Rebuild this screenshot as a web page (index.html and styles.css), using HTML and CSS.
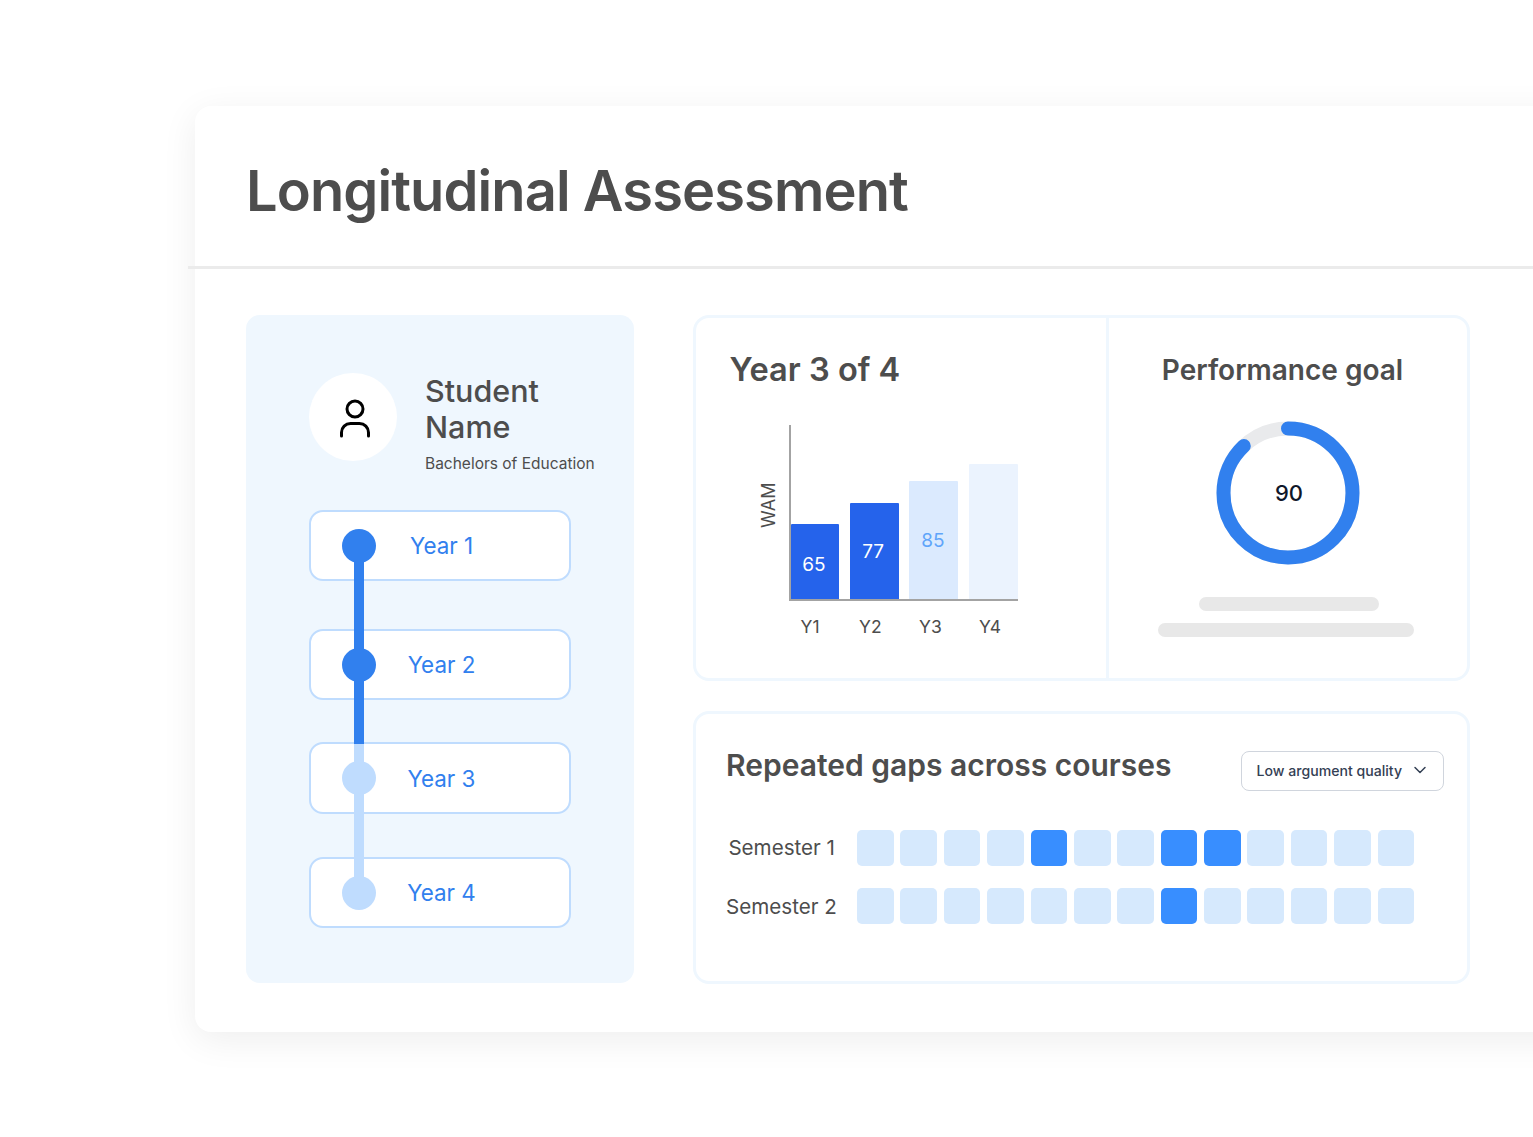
FILE: index.html
```html
<!DOCTYPE html>
<html lang="en">
<head>
    <meta charset="UTF-8">
    <title>Longitudinal Assessment</title>
    <link rel="stylesheet" href="styles.css">
</head>
<body>
    <div class="card">
        <h1 class="page-title">Longitudinal Assessment</h1>
        <div class="rule"></div>

        <div class="content">
            <!-- Student column -->
            <div class="student">
                <div class="student-head">
                    <div class="avatar">
                        <svg width="88" height="88" viewBox="0 0 88 88" fill="none" stroke="#000" stroke-width="3" stroke-linecap="round">
                            <circle cx="46" cy="36" r="8"/>
                            <path d="M32.5 63v-3.5a9 9 0 0 1 9-9h9a9 9 0 0 1 9 9V63"/>
                        </svg>
                    </div>
                    <div class="student-text">
                        <div class="student-name">Student Name</div>
                        <div class="student-degree">Bachelors of Education</div>
                    </div>
                </div>

                <div class="years">
                    <div class="year-row done"><span class="dot"></span><span class="year-label">Year 1</span></div>
                    <div class="year-row done"><span class="dot"></span><span class="year-label">Year 2</span></div>
                    <div class="year-row"><span class="dot"></span><span class="year-label">Year 3</span></div>
                    <div class="year-row"><span class="dot"></span><span class="year-label">Year 4</span></div>
                    <div class="year-line"></div>
                </div>
            </div>

            <div class="panels">
                <div class="panel panel-top">
                    <div class="progress">
                        <h2 class="progress-title">Year 3 of 4</h2>
                        <div class="chart">
                            <div class="chart-axis-name">WAM</div>
                            <div class="chart-main">
                                <div class="chart-plot">
                                    <div class="bar bar-strong bar-low" style="height: 75px">65</div>
                                    <div class="bar bar-strong" style="height: 96px">77</div>
                                    <div class="bar bar-soft" style="height: 118px">85</div>
                                    <div class="bar bar-empty" style="height: 135px"></div>
                                </div>
                                <div class="chart-labels">
                                    <span>Y1</span><span>Y2</span><span>Y3</span><span>Y4</span>
                                </div>
                            </div>
                        </div>
                    </div>
                    <div class="goal">
                        <h2 class="goal-title">Performance goal</h2>
                        <div class="donut">
                            <svg width="144" height="144" viewBox="0 0 144 144" fill="none" stroke-width="14">
                                <circle cx="72" cy="72" r="64.5" stroke="#e9eaec"/>
                                <circle cx="72" cy="72" r="64.5" stroke="#3180ee" stroke-linecap="round" stroke-dasharray="356 405.3" transform="rotate(-90 72 72)"/>
                            </svg>
                            <span class="donut-value">90</span>
                        </div>
                        <div class="skeleton skeleton-short"></div>
                        <div class="skeleton skeleton-long"></div>
                    </div>
                </div>

                <div class="panel panel-gaps">
                    <div class="gaps-head">
                        <h2 class="gaps-title">Repeated gaps across courses</h2>
                        <div class="select">
                            Low argument quality
                            <svg width="14" height="14" viewBox="0 0 14 14" fill="none" stroke="#344054" stroke-width="1.5" stroke-linecap="round" stroke-linejoin="round">
                                <path d="M2 3.5l5 5 5-5"/>
                            </svg>
                        </div>
                    </div>
                    <div class="gap-row">
                        <span class="gap-label">Semester 1</span>
                        <div class="cells">
                            <i></i><i></i><i></i><i></i><i class="on"></i><i></i><i></i><i class="on"></i><i class="on"></i><i></i><i></i><i></i><i></i>
                        </div>
                    </div>
                    <div class="gap-row">
                        <span class="gap-label">Semester 2</span>
                        <div class="cells">
                            <i></i><i></i><i></i><i></i><i></i><i></i><i></i><i class="on"></i><i></i><i></i><i></i><i></i><i></i>
                        </div>
                    </div>
                </div>
            </div>
        </div>
    </div>
</body>
</html>
```

FILE: styles.css
```css
* {
    margin: 0;
    padding: 0;
    box-sizing: border-box;
}
html, body {
    height: 100%;
    overflow: hidden;
    background: #fff;
}
body {
    padding: 106px 0 0 195px;
    font-family: "Inter", "Liberation Sans", sans-serif;
    color: #4d4d4d;
}
.card {
    width: 1400px;
    height: 926px;
    background: #fff;
    border-radius: 16px;
    box-shadow: 0 8px 36px rgba(0, 0, 0, 0.07);
}
.page-title {
    padding: 51px 0 0 51px;
    height: 160px;
    font-size: 56px;
    line-height: 68px;
    font-weight: 600;
    letter-spacing: -0.9px;
}
.rule {
    height: 3px;
    margin-left: -7px;
    background: #ebebeb;
}
.content {
    display: flex;
    gap: 59px;
    padding: 46px 0 0 51px;
}

/* Student column */
.student {
    width: 388px;
    height: 668px;
    padding: 58px 63px 0;
    background: #eff7fe;
    border-radius: 14px;
}
.student-head {
    display: flex;
    gap: 28px;
}
.avatar {
    flex: none;
    width: 88px;
    height: 88px;
    border-radius: 50%;
    background: #fff;
}
.avatar svg {
    display: block;
}
.student-text {
    width: 175px;
    flex: none;
}
.student-name {
    font-size: 30.5px;
    line-height: 36px;
    font-weight: 550;
    width: 130px;
}
.student-degree {
    margin-top: 9px;
    font-size: 15.5px;
    line-height: 20px;
    white-space: nowrap;
}
.years {
    position: relative;
    margin-top: 36px;
    width: 262px;
}
.year-row {
    display: flex;
    align-items: center;
    height: 71px;
    padding-left: 31px;
    background: #fff;
    border: 2px solid #bfdcfe;
    border-radius: 14px;
}
.year-row:nth-child(2) {
    margin-top: 48px;
}
.year-row:nth-child(3) {
    margin-top: 42px;
    height: 72px;
}
.year-row:nth-child(4) {
    margin-top: 43px;
}
.dot {
    flex: none;
    width: 34px;
    height: 34px;
    border-radius: 50%;
    background: #bfdcfe;
}
.done .dot {
    background: #3180ee;
}
.year-label {
    flex: 1;
    padding-right: 62px;
    text-align: center;
    font-size: 22.4px;
    color: #3180ee;
}
.year-line {
    position: absolute;
    left: 45px;
    top: 36px;
    width: 10px;
    height: 346px;
    background: linear-gradient(#3180ee 198px, #bfdcfe 198px);
}

/* Right column */
.panels {
    width: 777px;
}
.panel {
    background: #fff;
    border: 3px solid #eff7fe;
    border-radius: 16px;
}
.panel-top {
    display: flex;
    height: 366px;
}
.progress {
    width: 413px;
    padding: 31px 0 0 33.5px;
    border-right: 3px solid #eff7fe;
}
.progress-title {
    font-size: 32.6px;
    line-height: 40px;
    font-weight: 600;
}
.chart {
    display: flex;
    margin: 36px 0 0 26.5px;
}
.chart-axis-name {
    width: 26px;
    height: 160px;
    margin-right: 7px;
    writing-mode: vertical-rl;
    transform: rotate(180deg);
    text-align: center;
    font-size: 18px;
    line-height: 26px;
}
.chart-main {
    width: 229px;
}
.chart-plot {
    display: flex;
    align-items: flex-end;
    gap: 10.67px;
    height: 176px;
    border-left: 2px solid #a3a3a3;
    border-bottom: 2px solid #a3a3a3;
}
.bar {
    display: flex;
    align-items: center;
    justify-content: center;
    width: 49px;
    padding-right: 2px;
    border-radius: 1px 1px 0 0;
    font-size: 19px;
}
.bar:first-child {
    width: 48px;
}
.bar-strong {
    background: #2563eb;
    color: #fff;
}
.bar-low {
    padding-top: 5px;
}
.bar-soft {
    background: #dbeafe;
    color: #60a5fa;
}
.bar-empty {
    background: #ebf3fe;
}
.chart-labels {
    display: flex;
    gap: 38px;
    margin-top: 15px;
    padding-left: 10px;
    font-size: 17.5px;
    line-height: 22px;
}
.chart-labels span {
    width: 22px;
    text-align: center;
}
.goal {
    flex: 1;
    display: flex;
    flex-direction: column;
    align-items: center;
    padding-top: 34px;
}
.goal-title {
    padding-right: 11px;
    font-size: 28px;
    line-height: 36px;
    font-weight: 600;
    white-space: nowrap;
}
.donut {
    position: relative;
    width: 144px;
    height: 144px;
    margin-top: 32.5px;
}
.donut svg {
    display: block;
}
.donut-value {
    position: absolute;
    inset: 0;
    display: flex;
    align-items: center;
    justify-content: center;
    padding-left: 2px;
    font-size: 22px;
    font-weight: 500;
    color: #0f172a;
}
.skeleton {
    height: 14px;
    border-radius: 7px;
    background: #e8e8e8;
}
.skeleton-short {
    width: 180px;
    margin: 32.5px 0 0 1px;
}
.skeleton-long {
    width: 256px;
    margin: 12px 5px 0 0;
}
.panel-gaps {
    height: 273.5px;
    margin-top: 29.5px;
    padding: 0 23px 0 30px;
}
.gaps-head {
    display: flex;
    justify-content: space-between;
    align-items: flex-start;
    height: 116px;
}
.gaps-title {
    margin-top: 31px;
    font-size: 30px;
    line-height: 40px;
    font-weight: 600;
    white-space: nowrap;
}
.select {
    display: flex;
    align-items: center;
    gap: 11px;
    height: 40px;
    margin-top: 37px;
    padding: 0 16px 0 15px;
    background: #fff;
    border: 1px solid #d0d5dd;
    border-radius: 8px;
    font-size: 14.1px;
    font-weight: 500;
    color: #344054;
    white-space: nowrap;
}
.gap-row {
    display: flex;
    align-items: center;
    margin-bottom: 21.6px;
}
.gap-label {
    width: 109px;
    text-align: right;
    font-size: 20.6px;
    white-space: nowrap;
}
.cells {
    display: flex;
    gap: 6.7px;
    margin-left: 22px;
}
.cells i {
    display: block;
    width: 36.7px;
    height: 36.7px;
    border-radius: 5px;
    background: #d6e9fd;
}
.cells i.on {
    background: #388eff;
}
```
